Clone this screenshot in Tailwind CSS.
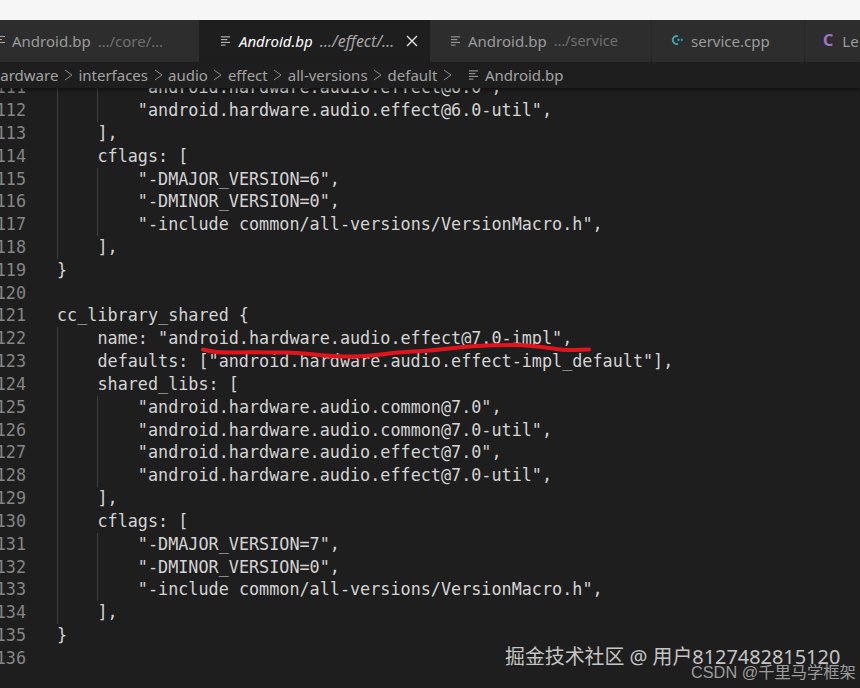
<!doctype html>
<html lang="en">
<head>
<meta charset="UTF-8" />
<title>Android.bp</title>
<script src="https://cdn.jsdelivr.net/npm/@tailwindcss/browser@4"></script>
</head>
<body class="bg-[#1e1e1e]">
<div class="relative w-[860px] h-[688px] overflow-hidden flex flex-col bg-[#1e1e1e]">
  <div class="h-5 shrink-0 bg-[#f6f6f6]"></div>

  <!-- tabs -->
  <div class="h-[42px] shrink-0 flex bg-[#252526] font-['Noto_Sans'] text-[15px] whitespace-nowrap">
    <div class="w-[205px] shrink-0 flex items-center gap-[6px] -ml-[6px] bg-[#2d2d2d] text-[#9b9b9b]">
      <svg class="w-[12px] h-[12px] shrink-0" viewBox="0 0 12 12" stroke="#a8a8a8" stroke-width="1"><path d="M1 1.5h10M1 4.5h7M1 7.5h10M1 10.5h5"/></svg>
      <span>Android.bp</span><span class="ml-[1px] text-[15px] text-[#6f6f6f]">…/core/…</span>
    </div>
    <div class="w-[231px] shrink-0 flex items-center pl-[21px] bg-[#1e1e1e] text-white">
      <svg class="w-[11px] h-[12px] shrink-0" viewBox="0 0 12 12" stroke="#d8d8d8" stroke-width="1"><path d="M1 1.5h10M1 4.5h7M1 7.5h10M1 10.5h5"/></svg>
      <span class="ml-[8px] italic">Android.bp</span><span class="ml-[7px] italic text-[16px] text-[#a5a5a5]">…/effect/…</span>
      <svg class="ml-[12px] w-[12px] h-[12px] shrink-0" viewBox="0 0 12 12" stroke="#e8e8e8" stroke-width="1.4"><path d="M1 1l10 10M11 1L1 11"/></svg>
    </div>
    <div class="w-[222px] shrink-0 flex items-center pl-[20px] bg-[#2d2d2d] border-r border-[#252526] text-[#9b9b9b]">
      <svg class="w-[11px] h-[12px] shrink-0" viewBox="0 0 12 12" stroke="#b0b0b0" stroke-width="1"><path d="M1 1.5h10M1 4.5h7M1 7.5h10M1 10.5h5"/></svg>
      <span class="ml-[7px]">Android.bp</span><span class="ml-[7px] text-[14.5px] text-[#6f6f6f]">…/service</span>
    </div>
    <div class="w-[153px] shrink-0 flex items-center pl-[18px] bg-[#2d2d2d] border-r border-[#252526] text-[#9b9b9b]">
      <svg class="w-[14px] h-[14px] shrink-0 -mt-[2px]" viewBox="0 0 14 14" fill="none" stroke="#3f9fb3"><path d="M8 3.2A4 4 0 1 0 8 10.8" stroke-width="2"/><path d="M7 6.9h3M8.5 5.6v2.6M10.7 6.9h2.3M11.9 5.7v2.4" stroke-width="1"/></svg>
      <span class="ml-[7px]">service.cpp</span>
    </div>
    <div class="flex-1 flex items-center pl-[18px] bg-[#2d2d2d] text-[#9b9b9b]">
      <span class="font-bold text-[16px] text-[#a074c4] -mt-[3px]">C</span>
      <span class="ml-[9px]">Le</span>
    </div>
  </div>

  <!-- breadcrumb -->
  <div class="relative z-10 h-[26px] shrink-0 flex items-center -ml-[9px] gap-[5.5px] bg-[#1e1e1e] font-['Noto_Sans'] text-[15px] text-[#a3a3a3] whitespace-nowrap shadow-[0_2px_4px_#00000080]">
    <span>hardware</span><svg class="w-[9px] h-[12px] shrink-0" viewBox="0 0 9 12" fill="none" stroke="#8a8a8a"><path d="M1 1l7 5-7 5"/></svg>
    <span>interfaces</span><svg class="w-[9px] h-[12px] shrink-0" viewBox="0 0 9 12" fill="none" stroke="#8a8a8a"><path d="M1 1l7 5-7 5"/></svg>
    <span>audio</span><svg class="w-[9px] h-[12px] shrink-0" viewBox="0 0 9 12" fill="none" stroke="#8a8a8a"><path d="M1 1l7 5-7 5"/></svg>
    <span>effect</span><svg class="w-[9px] h-[12px] shrink-0" viewBox="0 0 9 12" fill="none" stroke="#8a8a8a"><path d="M1 1l7 5-7 5"/></svg>
    <span>all-versions</span><svg class="w-[9px] h-[12px] shrink-0" viewBox="0 0 9 12" fill="none" stroke="#8a8a8a"><path d="M1 1l7 5-7 5"/></svg>
    <span>default</span><svg class="w-[9px] h-[12px] shrink-0" viewBox="0 0 9 12" fill="none" stroke="#8a8a8a"><path d="M1 1l7 5-7 5"/></svg>
    <svg class="ml-[11px] w-[11px] h-[12px] shrink-0" viewBox="0 0 12 12" stroke="#b0b0b0" stroke-width="1"><path d="M1 1.5h10M1 4.5h7M1 7.5h10M1 10.5h5"/></svg>
    <span>Android.bp</span>
  </div>

  <!-- editor -->
  <div class="flex-1 flex -mt-[11.8px] font-['DejaVu_Sans_Mono'] text-[16.8px] leading-[22.83px] whitespace-pre">
    <div class="w-[26px] shrink-0 flex flex-col items-end text-[#858585]">
      <span>111</span><span>112</span><span>113</span><span>114</span><span>115</span><span>116</span><span>117</span><span>118</span><span>119</span><span>120</span><span>121</span><span>122</span><span>123</span><span>124</span><span>125</span><span>126</span><span>127</span><span>128</span><span>129</span><span>130</span><span>131</span><span>132</span><span>133</span><span>134</span><span>135</span><span>136</span>
    </div>
    <div class="ml-[31px] flex flex-col text-[#d4d4d4]">
      <div class="h-[22.83px]"><span class="inline-block h-full align-top shadow-[inset_1px_0_0_#404040]">    </span><span class="inline-block h-full align-top shadow-[inset_1px_0_0_#404040]">    </span>"android.hardware.audio.effect@6.0",</div>
      <div class="h-[22.83px]"><span class="inline-block h-full align-top shadow-[inset_1px_0_0_#404040]">    </span><span class="inline-block h-full align-top shadow-[inset_1px_0_0_#404040]">    </span>"android.hardware.audio.effect@6.0-util",</div>
      <div class="h-[22.83px]"><span class="inline-block h-full align-top shadow-[inset_1px_0_0_#404040]">    </span>],</div>
      <div class="h-[22.83px]"><span class="inline-block h-full align-top shadow-[inset_1px_0_0_#404040]">    </span>cflags: [</div>
      <div class="h-[22.83px]"><span class="inline-block h-full align-top shadow-[inset_1px_0_0_#404040]">    </span><span class="inline-block h-full align-top shadow-[inset_1px_0_0_#404040]">    </span>"-DMAJOR_VERSION=6",</div>
      <div class="h-[22.83px]"><span class="inline-block h-full align-top shadow-[inset_1px_0_0_#404040]">    </span><span class="inline-block h-full align-top shadow-[inset_1px_0_0_#404040]">    </span>"-DMINOR_VERSION=0",</div>
      <div class="h-[22.83px]"><span class="inline-block h-full align-top shadow-[inset_1px_0_0_#404040]">    </span><span class="inline-block h-full align-top shadow-[inset_1px_0_0_#404040]">    </span>"-include common/all-versions/VersionMacro.h",</div>
      <div class="h-[22.83px]"><span class="inline-block h-full align-top shadow-[inset_1px_0_0_#404040]">    </span>],</div>
      <div class="h-[22.83px]">}</div>
      <div class="h-[22.83px]"></div>
      <div class="h-[22.83px]">cc_library_shared {</div>
      <div class="h-[22.83px]"><span class="inline-block h-full align-top shadow-[inset_1px_0_0_#404040]">    </span>name: "android.hardware.audio.effect@7.0-impl",</div>
      <div class="h-[22.83px]"><span class="inline-block h-full align-top shadow-[inset_1px_0_0_#404040]">    </span>defaults: ["android.hardware.audio.effect-impl_default"],</div>
      <div class="h-[22.83px]"><span class="inline-block h-full align-top shadow-[inset_1px_0_0_#404040]">    </span>shared_libs: [</div>
      <div class="h-[22.83px]"><span class="inline-block h-full align-top shadow-[inset_1px_0_0_#404040]">    </span><span class="inline-block h-full align-top shadow-[inset_1px_0_0_#404040]">    </span>"android.hardware.audio.common@7.0",</div>
      <div class="h-[22.83px]"><span class="inline-block h-full align-top shadow-[inset_1px_0_0_#404040]">    </span><span class="inline-block h-full align-top shadow-[inset_1px_0_0_#404040]">    </span>"android.hardware.audio.common@7.0-util",</div>
      <div class="h-[22.83px]"><span class="inline-block h-full align-top shadow-[inset_1px_0_0_#404040]">    </span><span class="inline-block h-full align-top shadow-[inset_1px_0_0_#404040]">    </span>"android.hardware.audio.effect@7.0",</div>
      <div class="h-[22.83px]"><span class="inline-block h-full align-top shadow-[inset_1px_0_0_#404040]">    </span><span class="inline-block h-full align-top shadow-[inset_1px_0_0_#404040]">    </span>"android.hardware.audio.effect@7.0-util",</div>
      <div class="h-[22.83px]"><span class="inline-block h-full align-top shadow-[inset_1px_0_0_#404040]">    </span>],</div>
      <div class="h-[22.83px]"><span class="inline-block h-full align-top shadow-[inset_1px_0_0_#404040]">    </span>cflags: [</div>
      <div class="h-[22.83px]"><span class="inline-block h-full align-top shadow-[inset_1px_0_0_#404040]">    </span><span class="inline-block h-full align-top shadow-[inset_1px_0_0_#404040]">    </span>"-DMAJOR_VERSION=7",</div>
      <div class="h-[22.83px]"><span class="inline-block h-full align-top shadow-[inset_1px_0_0_#404040]">    </span><span class="inline-block h-full align-top shadow-[inset_1px_0_0_#404040]">    </span>"-DMINOR_VERSION=0",</div>
      <div class="h-[22.83px]"><span class="inline-block h-full align-top shadow-[inset_1px_0_0_#404040]">    </span><span class="inline-block h-full align-top shadow-[inset_1px_0_0_#404040]">    </span>"-include common/all-versions/VersionMacro.h",</div>
      <div class="h-[22.83px]"><span class="inline-block h-full align-top shadow-[inset_1px_0_0_#404040]">    </span>],</div>
      <div class="h-[22.83px]">}</div>
    </div>
  </div>

  <!-- red marker stroke drawn over the code -->
  <svg class="absolute left-0 top-0 w-[860px] h-[688px] pointer-events-none" viewBox="0 0 860 688" fill="none">
    <path d="M203 349.5C212 352 222 353 236 352.5C252 352 266 352.5 280 352.5C300 351.5 318 356 345 356.5C365 357 382 354 398 352.5C415 351 430 351 445 349C465 346.5 490 345 515 345C535 345 550 349 566 350C575 350.5 582 349.5 589 349.5" stroke="#e1141c" stroke-width="4" stroke-linecap="round"/>
  </svg>

  <!-- watermarks -->
  <div class="absolute left-[505px] top-[643px] font-['Noto_Sans','Noto_Sans_CJK_SC',sans-serif] text-[19.9px] leading-[28px] text-[#c4c4c4] whitespace-nowrap">掘金技术社区 @ 用户8127482815120</div>
  <div class="absolute left-[691px] top-[661px] font-['Liberation_Sans','Noto_Sans_CJK_SC',sans-serif] text-[16.3px] leading-[22px] text-[#9c9c9c] whitespace-nowrap">CSDN @千里马学框架</div>
</div>
</body>
</html>
